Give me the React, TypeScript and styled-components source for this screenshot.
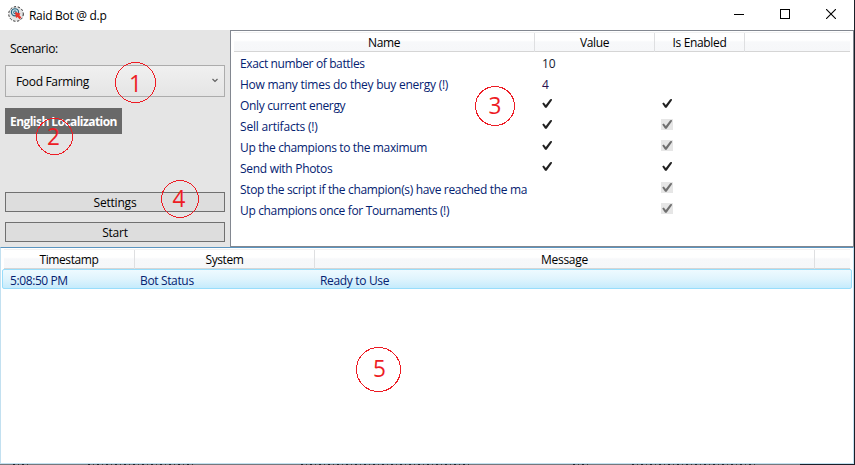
import React from "react";
import styled, { createGlobalStyle } from "styled-components";

const GlobalStyle = createGlobalStyle`
  * { box-sizing: border-box; }
  body { margin: 0; background: #fff; overflow: hidden; }
`;

const speckle = "repeating-linear-gradient(to right, #1c2128 0 2px, transparent 2px 5px, #33302f 5px 6px, transparent 6px 9px)";

const Screen = styled.div`
  position: relative;
  width: 855px;
  height: 465px;
  overflow: hidden;
  padding: 0 1px 1px 0;
  background:
    ${speckle} 13px 464px / 17px 1px no-repeat,
    ${speckle} 88px 464px / 106px 1px no-repeat,
    ${speckle} 301px 464px / 170px 1px no-repeat,
    ${speckle} 573px 464px / 15px 1px no-repeat,
    ${speckle} 632px 464px / 124px 1px no-repeat,
    linear-gradient(to right, #73787c 0 800px, #1a1f28 800px);
  font-family: "Open Sans", "Noto Sans", sans-serif;
  font-size: 12px;
  color: #000;
`;

const Window = styled.div`
  display: flex;
  flex-direction: column;
  height: 464px;
  background: #fff;
`;

const Label = styled.span<{ $track?: number }>`
  letter-spacing: ${(p) => p.$track ?? -0.2}px;
  white-space: nowrap;
`;

const TitleBar = styled.header`
  flex: none;
  display: flex;
  align-items: center;
  height: 30px;
  padding-left: 8px;
`;

const AppIcon = styled.svg`
  width: 16px;
  height: 16px;
  margin: 0 5px 2px 0;
`;

const Controls = styled.div`
  display: flex;
  margin: 0 0 2px auto;
`;

const ControlButton = styled.div`
  display: grid;
  place-items: center;
  width: 46px;
  height: 28px;
`;

const Upper = styled.div`
  flex: none;
  display: flex;
  height: 217px;
`;

const SidePanel = styled.aside`
  display: flex;
  flex-direction: column;
  align-items: flex-start;
  width: 230px;
  padding: 10px 5px 5px;
  background: #e5e5e5;
`;

const ScenarioLabel = styled.div`
  height: 18px;
  line-height: 18px;
  padding-left: 5px;
`;

const Combo = styled.div`
  display: flex;
  align-items: center;
  justify-content: space-between;
  width: 220px;
  height: 32px;
  margin-top: 7px;
  padding: 1px 5px 0 10px;
  border: 1px solid #acacac;
  background: linear-gradient(#f0f0f0, #e5e5e5);
  svg { margin-bottom: 2px; }
`;

const Localization = styled.div`
  width: 117px;
  height: 26px;
  margin: 11px 0 auto;
  padding-left: 5px;
  line-height: 27px;
  background: #696969;
  color: #fff;
  font-weight: 700;
`;

const Button = styled.div`
  width: 220px;
  height: 20px;
  margin-top: 10px;
  border: 1px solid #707070;
  background: #ddd;
  line-height: 20px;
  text-align: center;
`;

const SettingsList = styled.section`
  flex: 1;
  padding: 1px 3px 0;
  border: 1px solid #828790;
`;

const LogList = styled.section`
  flex: 1;
  padding: 1px 1px 0;
  border: 1px solid #c2e0f0;
  border-top-color: #5a94bf;
`;

const HeaderRow = styled.div<{ $columns: string; $inset?: boolean }>`
  display: grid;
  grid-template-columns: ${(p) => p.$columns};
  height: 20px;
  margin: ${(p) => (p.$inset ? "0 2px" : "0")};
  border-top: 1px solid #f2f2f2;
  border-bottom: 1px solid #d5d5d5;
  background: linear-gradient(#fff 40%, #f7f8fa 50%, #f6f7f9);
`;

const HeaderCell = styled.div`
  border-right: 1px solid #dedfe1;
  line-height: 19px;
  text-align: center;
  &:last-child { border-right: 0; }
`;

const SettingRow = styled.div`
  display: grid;
  grid-template-columns: 301px 120px 90px;
  height: 21px;
  line-height: 23px;
`;

const NameCell = styled.div`
  width: 295px;
  padding-left: 6px;
  overflow: hidden;
  color: #042271;
`;

const ValueCell = styled.div<{ $color: string }>`
  padding-left: ${(p) => (p.$color === "#000" ? 6 : 7)}px;
  color: ${(p) => p.$color};
`;

const EnabledCell = styled.div`
  padding-left: 6px;
`;

const CheckBox = styled.div<{ $disabled?: boolean }>`
  width: 12px;
  height: 11px;
  margin-top: 4px;
  background: ${(p) => (p.$disabled ? "#e6e6e6" : "transparent")};
  color: ${(p) => (p.$disabled ? "#707070" : "#212121")};
  svg { display: block; }
`;

const LogRow = styled.div`
  display: grid;
  grid-template-columns: 130px 180px 1fr;
  height: 20px;
  padding-left: 7px;
  border: 1px solid #98ddfb;
  border-radius: 2px;
  background: linear-gradient(#eefaff, #dff4fd 50%, #c5ebfc);
  line-height: 21px;
  color: #042271;
`;

const Marker = styled.div<{ $x: number; $y: number; $size: number }>`
  position: absolute;
  left: ${(p) => p.$x}px;
  top: ${(p) => p.$y}px;
  width: ${(p) => p.$size}px;
  height: ${(p) => p.$size}px;
  svg { position: absolute; inset: 0; overflow: visible; }
`;

const MarkerDigit = styled.span<{ $dx: number; $dy: number }>`
  position: absolute;
  left: ${(p) => p.$dx}px;
  top: ${(p) => p.$dy}px;
  width: 100%;
  height: 100%;
  display: grid;
  place-items: center;
  font-size: 24px;
  line-height: 1;
  color: #ed1c24;
  transform: scaleX(0.94);
`;

const Check = ({ disabled }: { disabled?: boolean }) => (
  <CheckBox $disabled={disabled}>
    <svg width="12" height="11" viewBox="0 0 12 11">
      <path d="M1.2 5.5 L2.8 4.6 L4.8 6.9 L9.2 1.2 L11 1 L10.8 2.6 L5.6 9.8 L4.1 9.8 Z" fill="currentColor" />
    </svg>
  </CheckBox>
);

type Setting = {
  name: string;
  track: number;
  value?: string;
  color?: string;
  checked?: boolean;
  enabled?: "on" | "locked";
};

const settings: Setting[] = [
  { name: "Exact number of battles", track: -0.37, value: "10", color: "#151a30" },
  { name: "How many times do they buy energy (!)", track: -0.25, value: "4", color: "#2a0f4c" },
  { name: "Only current energy", track: -0.33, checked: true, enabled: "on" },
  { name: "Sell artifacts (!)", track: -0.2, checked: true, enabled: "locked" },
  { name: "Up the champions to the maximum", track: -0.36, checked: true, enabled: "locked" },
  { name: "Send with Photos", track: -0.3, checked: true, enabled: "on" },
  { name: "Stop the script if the champion(s) have reached the ma", track: -0.34, enabled: "locked" },
  { name: "Up champions once for Tournaments (!)", track: -0.35, enabled: "locked" },
];

const markers = [
  { n: 1, x: 115, y: 62, size: 41, dx: 0, dy: 0 },
  { n: 2, x: 36, y: 118, size: 37, dx: -1, dy: -1 },
  { n: 3, x: 475, y: 86, size: 40, dx: 0, dy: -1 },
  { n: 4, x: 161, y: 180, size: 38, dx: -1, dy: -1 },
  { n: 5, x: 356, y: 347, size: 45, dx: 1, dy: -2 },
];

export default function App() {
  return (
    <Screen>
      <GlobalStyle />
      <Window>
        <TitleBar>
          <AppIcon viewBox="0 0 16 16">
            <circle cx="8" cy="8" r="7.3" fill="#e4e4e4" stroke="#111" strokeWidth="0.9" strokeDasharray="2.2 1.8" />
            <circle cx="7" cy="6.3" r="3.6" fill="#c8dce6" stroke="#27647f" strokeWidth="1.1" />
            <circle cx="7" cy="6.3" r="1.4" fill="none" stroke="#27647f" strokeWidth="0.9" />
            <path d="M7 6 L12.4 7.4 L11.4 9.3 L13.4 11.5 L11.6 13.2 L9.5 11 L8 12 Z" fill="#e8352b" />
          </AppIcon>
          <Label $track={-0.3}>Raid Bot @ d.p</Label>
          <Controls>
            <ControlButton>
              <svg width="10" height="10" shapeRendering="crispEdges"><path d="M0 5.5H10" stroke="#000" /></svg>
            </ControlButton>
            <ControlButton>
              <svg width="10" height="10" shapeRendering="crispEdges"><rect x=".5" y=".5" width="9" height="9" fill="none" stroke="#000" /></svg>
            </ControlButton>
            <ControlButton>
              <svg width="10" height="10"><path d="M0 0L10 10M10 0L0 10" stroke="#000" strokeWidth="1.1" /></svg>
            </ControlButton>
          </Controls>
        </TitleBar>
        <Upper>
          <SidePanel>
            <ScenarioLabel><Label $track={-0.4}>Scenario:</Label></ScenarioLabel>
            <Combo>
              <Label $track={-0.33}>Food Farming</Label>
              <svg width="8" height="6" viewBox="0 0 8 6"><path d="M1.5 1L4 3.4L6.5 1" fill="none" stroke="#606060" strokeWidth="1.2" /></svg>
            </Combo>
            <Localization><Label $track={-0.55}>English Localization</Label></Localization>
            <Button><Label>Settings</Label></Button>
            <Button><Label>Start</Label></Button>
          </SidePanel>
          <SettingsList>
            <HeaderRow $columns="301px 120px 90px 1fr">
              <HeaderCell><Label $track={-0.4}>Name</Label></HeaderCell>
              <HeaderCell><Label $track={-0.4}>Value</Label></HeaderCell>
              <HeaderCell><Label $track={-0.35}>Is Enabled</Label></HeaderCell>
              <HeaderCell />
            </HeaderRow>
            {settings.map((s) => (
              <SettingRow key={s.name}>
                <NameCell><Label $track={s.track}>{s.name}</Label></NameCell>
                <ValueCell $color={s.color ?? "#000"}>
                  {s.checked ? <Check /> : <Label>{s.value}</Label>}
                </ValueCell>
                <EnabledCell>{s.enabled && <Check disabled={s.enabled === "locked"} />}</EnabledCell>
              </SettingRow>
            ))}
          </SettingsList>
        </Upper>
        <LogList>
          <HeaderRow $columns="131px 180px 500px 1fr" $inset>
            <HeaderCell><Label $track={-0.4}>Timestamp</Label></HeaderCell>
            <HeaderCell><Label $track={-0.4}>System</Label></HeaderCell>
            <HeaderCell><Label $track={-0.3}>Message</Label></HeaderCell>
            <HeaderCell />
          </HeaderRow>
          <LogRow>
            <Label $track={-0.4}>5:08:50 PM</Label>
            <Label $track={-0.35}>Bot Status</Label>
            <Label $track={-0.33}>Ready to Use</Label>
          </LogRow>
        </LogList>
      </Window>
      {markers.map((m) => (
        <Marker key={m.n} $x={m.x} $y={m.y} $size={m.size}>
          <svg width={m.size} height={m.size} shapeRendering="crispEdges">
            <circle cx={m.size / 2} cy={m.size / 2} r={m.size / 2 - 0.5} fill="none" stroke="#ed1c24" />
          </svg>
          <MarkerDigit $dx={m.dx} $dy={m.dy}>{m.n}</MarkerDigit>
        </Marker>
      ))}
    </Screen>
  );
}
